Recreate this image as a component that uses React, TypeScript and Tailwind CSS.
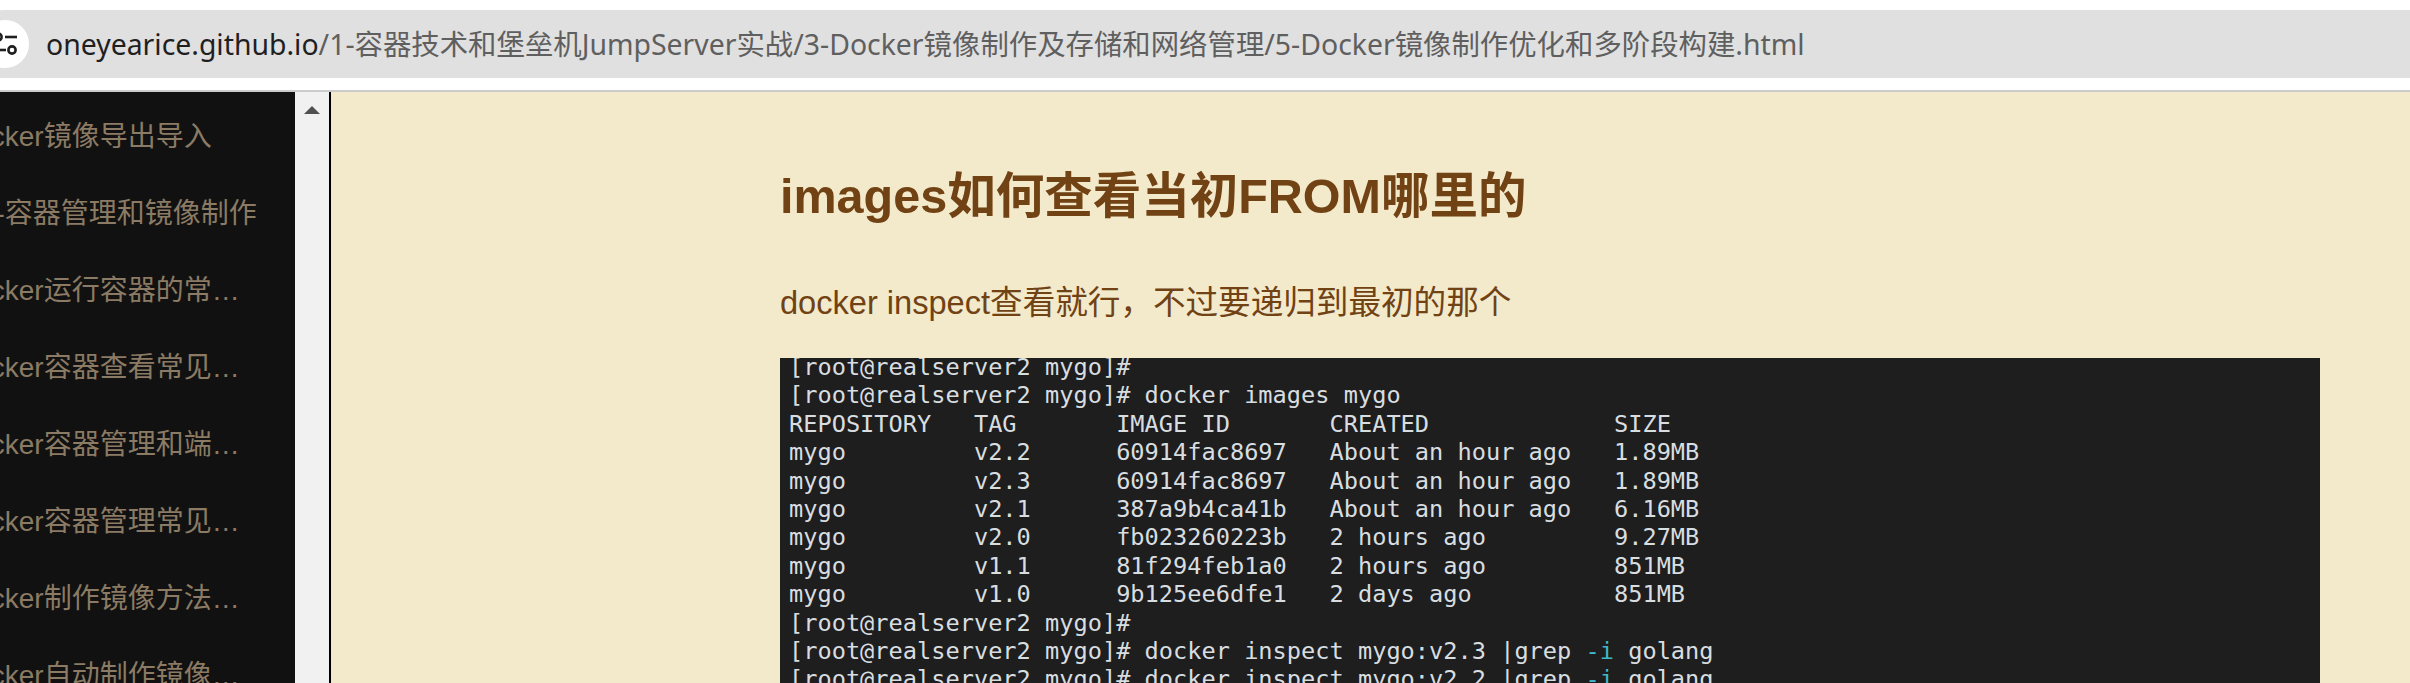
const terminal = [
  "[root@realserver2 mygo]#",
  "[root@realserver2 mygo]# docker images mygo",
  "REPOSITORY   TAG       IMAGE ID       CREATED             SIZE",
  "mygo         v2.2      60914fac8697   About an hour ago   1.89MB",
  "mygo         v2.3      60914fac8697   About an hour ago   1.89MB",
  "mygo         v2.1      387a9b4ca41b   About an hour ago   6.16MB",
  "mygo         v2.0      fb023260223b   2 hours ago         9.27MB",
  "mygo         v1.1      81f294feb1a0   2 hours ago         851MB",
  "mygo         v1.0      9b125ee6dfe1   2 days ago          851MB",
  "[root@realserver2 mygo]#",
];

const sidebar = [
  "Docker镜像导出导入",
  "OS-容器管理和镜像制作",
  "Docker运行容器的常见问题",
  "Docker容器查看常见问题",
  "Docker容器管理和端口映射",
  "Docker容器管理常见问题",
  "Docker制作镜像方法总结",
  "Docker自动制作镜像实战",
];

function GrepLine({ tag }: { tag: string }) {
  return (
    <div>
      {`[root@realserver2 mygo]# docker inspect mygo:${tag} |grep `}
      <span className="text-[#3fb6c9]">-i</span> golang
    </div>
  );
}

export default function App() {
  return (
    <div className="h-[683px] w-[2410px] overflow-hidden bg-white flex flex-col">
      <div className="h-[92px] shrink-0 overflow-hidden border-b-2 border-[#cccccc] pt-[10px]">
        <div className="-ml-[30px] flex h-[68px] items-center rounded-l-[34px] bg-[#e0e0e0]">
          <div className="ml-[11px] flex h-[48px] w-[48px] shrink-0 items-center justify-center rounded-full bg-white">
            <svg width="24" height="24" viewBox="0 0 24 24" fill="none" stroke="#1f1f1f" strokeWidth="2.6">
              <path d="M12 5h12" />
              <circle cx="5" cy="5" r="3.6" />
              <path d="M0 18h13" />
              <circle cx="19" cy="18" r="3.6" />
            </svg>
          </div>
          <div className="ml-[17px] whitespace-nowrap font-['Noto_Sans','Noto_Sans_CJK_SC',sans-serif] text-[28.4px] text-[#5f5f5f]">
            <span className="text-[#1f1f1f]">oneyearice.github.io</span>
            /1-容器技术和堡垒机JumpServer实战/3-Docker镜像制作及存储和网络管理/5-Docker镜像制作优化和多阶段构建.html
          </div>
        </div>
      </div>

      <div className="flex min-h-0 flex-1">
        <div className="w-[295px] shrink-0 overflow-hidden bg-[#111111] pt-[6px]">
          {sidebar.map((item) => (
            <div
              key={item}
              className="-ml-[45px] h-[77px] w-[305px] truncate font-['Liberation_Sans','Noto_Sans_CJK_SC',sans-serif] text-[28px] leading-[77px] text-[#8b7b64]"
            >
              {item}
            </div>
          ))}
        </div>

        <div className="w-[34px] shrink-0 bg-[#f1f1f1] pl-[9px] pt-[14px]">
          <div className="h-0 w-0 border-x-[8px] border-b-[8px] border-x-transparent border-b-[#505050]" />
        </div>

        <div className="min-w-0 flex-1 border-l-2 border-black bg-[#f3e9cb] pl-[449px] pt-[74px] font-['Liberation_Sans','Noto_Sans_CJK_SC',sans-serif] text-[#704214]">
          <h1 className="text-[48.5px] font-bold leading-[60px]">images如何查看当初FROM哪里的</h1>
          <p className="mt-[57px] text-[32.6px] leading-[40px]">docker inspect查看就行，不过要递归到最初的那个</p>
          <div className="mt-[35px] h-[400px] w-[1540px] overflow-hidden bg-[#1e1e1e] pl-[9px]">
            <div className="-mt-[5px] whitespace-pre font-['DejaVu_Sans_Mono',monospace] text-[23.64px] leading-[28.4px] text-[#d8dde0]">
              {terminal.map((line, i) => (
                <div key={i}>{line}</div>
              ))}
              <GrepLine tag="v2.3" />
              <GrepLine tag="v2.2" />
            </div>
          </div>
        </div>
      </div>
    </div>
  );
}
